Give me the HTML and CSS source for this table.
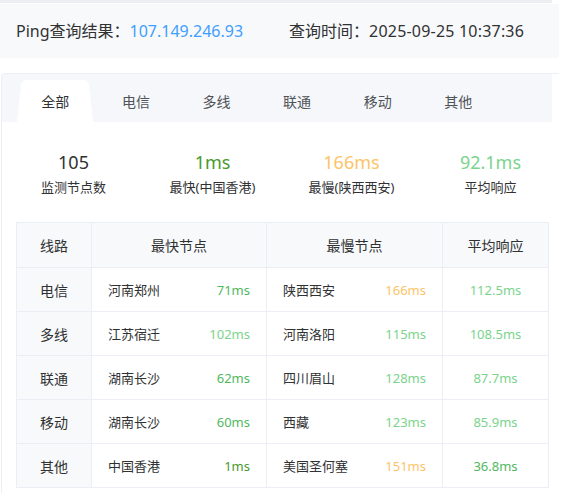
FILE: index.html
```html
<!DOCTYPE html>
<html lang="zh-CN">
<head>
<meta charset="utf-8">
<title>Ping查询结果</title>
<link rel="stylesheet" href="styles.css">
</head>
<body>
<div class="topstrip"></div>
<div class="summary">
  <span class="label">Ping查询结果：</span><span class="ip">107.149.246.93</span>
  <span class="label time-label">查询时间：</span><span class="time">2025-09-25 10:37:36</span>
</div>
<div class="card">
  <div class="tabs">
    <div class="tab active">全部</div>
    <div class="tab">电信</div>
    <div class="tab">多线</div>
    <div class="tab">联通</div>
    <div class="tab">移动</div>
    <div class="tab">其他</div>
  </div>
  <div class="stats">
    <div class="stat"><div class="num">105</div><div class="cap">监测节点数</div></div>
    <div class="stat"><div class="num c-fast">1ms</div><div class="cap">最快(中国香港)</div></div>
    <div class="stat"><div class="num c-slow">166ms</div><div class="cap">最慢(陕西西安)</div></div>
    <div class="stat"><div class="num c-avg">92.1ms</div><div class="cap">平均响应</div></div>
  </div>
  <table class="grid">
    <colgroup><col class="w1"><col class="w2"><col class="w3"><col class="w4"></colgroup>
    <thead>
      <tr><th>线路</th><th>最快节点</th><th>最慢节点</th><th>平均响应</th></tr>
    </thead>
    <tbody>
      <tr><td class="line">电信</td><td><div class="pair"><span>河南郑州</span><span class="c-good">71ms</span></div></td><td><div class="pair"><span>陕西西安</span><span class="c-slow">166ms</span></div></td><td class="avg"><span class="c-avg">112.5ms</span></td></tr>
      <tr><td class="line">多线</td><td><div class="pair"><span>江苏宿迁</span><span class="c-avg">102ms</span></div></td><td><div class="pair"><span>河南洛阳</span><span class="c-avg">115ms</span></div></td><td class="avg"><span class="c-avg">108.5ms</span></td></tr>
      <tr><td class="line">联通</td><td><div class="pair"><span>湖南长沙</span><span class="c-good">62ms</span></div></td><td><div class="pair"><span>四川眉山</span><span class="c-avg">128ms</span></div></td><td class="avg"><span class="c-avg">87.7ms</span></td></tr>
      <tr><td class="line">移动</td><td><div class="pair"><span>湖南长沙</span><span class="c-good">60ms</span></div></td><td><div class="pair"><span>西藏</span><span class="c-avg">123ms</span></div></td><td class="avg"><span class="c-avg">85.9ms</span></td></tr>
      <tr><td class="line">其他</td><td><div class="pair"><span>中国香港</span><span class="c-fast">1ms</span></div></td><td><div class="pair"><span>美国圣何塞</span><span class="c-slow">151ms</span></div></td><td class="avg"><span class="c-good">36.8ms</span></td></tr>
    </tbody>
  </table>
</div>
</body>
</html>
```

FILE: styles.css
```css
html, body {
  margin: 0;
  padding: 0;
  background: #ffffff;
  font-family: "Noto Sans", "Noto Sans CJK SC", sans-serif;
  color: #303133;
}

.topstrip {
  width: 552px;
  height: 3px;
  background: #eceef2;
}

.summary {
  margin-top: 1px;
  width: 543px;
  height: 54px;
  padding-left: 16px;
  background: #f8f9fb;
  display: flex;
  align-items: center;
  font-size: 16px;
  line-height: 22px;
}

.summary .label { color: #303133; }
.summary .ip { color: #409eff; }
.summary .time-label { margin-left: 46px; }
.summary .time { color: #303133; letter-spacing: 0.2px; }

.card {
  margin-top: 15px;
  margin-left: 1px;
  width: 558px;
  height: 440px;
  border-top: 1px solid #ebeef5;
  border-left: 1px solid #ebeef5;
  border-top-left-radius: 4px;
  box-sizing: border-box;
}

.tabs {
  width: 550px;
  height: 48px;
  background: #f5f7fa;
  display: flex;
  align-items: flex-end;
  padding-left: 13px;
  box-sizing: border-box;
  border-top-left-radius: 4px;
}

.tab {
  position: relative;
  width: 80.6px;
  height: 42px;
  display: flex;
  align-items: center;
  justify-content: center;
  font-size: 14px;
  color: #505358;
}

.tab.active {
  color: #303133;
  isolation: isolate;
}

.tab.active::before {
  content: "";
  position: absolute;
  z-index: -1;
  left: 2px;
  bottom: 0;
  width: 76px;
  height: 42px;
  background: #ffffff;
  clip-path: path('M0 42 L4 5 Q4.6 0 9.5 0 L66.5 0 Q71.4 0 72 5 L76 42 Z');
}

.stats {
  display: grid;
  grid-template-columns: repeat(4, 139px);
  padding-left: 2px;
  padding-top: 28px;
  height: 100px;
  box-sizing: border-box;
}

.stat { text-align: center; }

.num {
  font-size: 18px;
  line-height: 24px;
  color: #303133;
}

.cap {
  margin-top: 3px;
  font-size: 13px;
  line-height: 20px;
  color: #303133;
}

.c-fast { color: #4a9a2e; }
.c-good { color: #52b85e; }
.c-avg { color: #7ad48c; }
.c-slow { color: #fcc468; }

.grid {
  margin-left: 14px;
  width: 532px;
  border-collapse: collapse;
  table-layout: fixed;
  border: 1px solid #ebeef5;
}

.w1 { width: 75px; }
.w2 { width: 175px; }
.w3 { width: 176px; }
.w4 { width: 106px; }

.grid th, .grid td {
  border: 1px solid #ebeef5;
  padding: 0 16px;
  box-sizing: border-box;
}

.grid th {
  height: 45px;
  background: #f8f9fb;
  font-weight: normal;
  font-size: 14px;
  color: #303133;
  text-align: center;
}

.grid td {
  height: 44px;
  font-size: 13px;
  color: #303133;
}

.grid td.line {
  background: #f8f9fb;
  text-align: center;
  font-size: 14px;
  padding: 0;
}

.grid td.avg {
  text-align: center;
  font-size: 13px;
  padding: 0;
}

.pair {
  display: flex;
  justify-content: space-between;
  align-items: center;
  font-size: 13px;
}
```
